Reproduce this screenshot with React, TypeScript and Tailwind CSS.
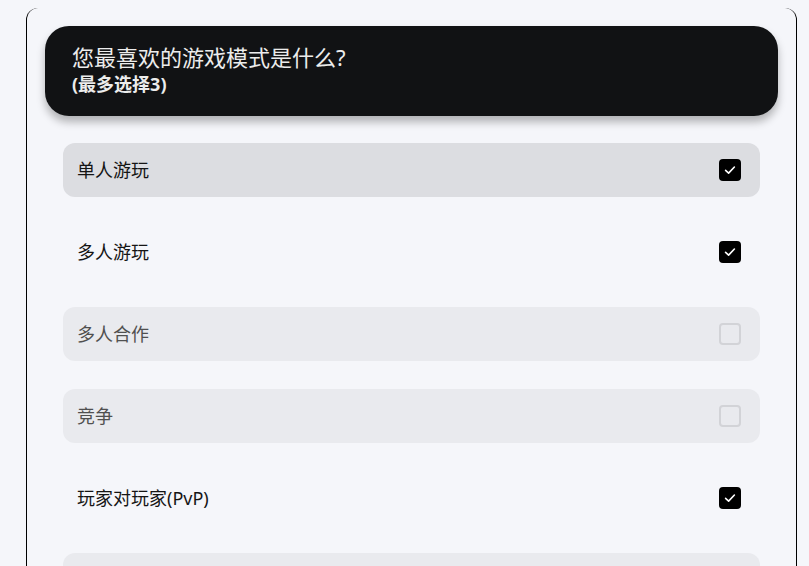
import React from "react";

const options = [
  { label: "单人游玩", checked: true, bg: "bg-[#dcdde1]", disabled: false },
  { label: "多人游玩", checked: true, bg: "bg-transparent", disabled: false },
  { label: "多人合作", checked: false, bg: "bg-[#e9eaee]", disabled: true },
  { label: "竞争", checked: false, bg: "bg-[#e9eaee]", disabled: true },
  { label: "玩家对玩家(PvP)", checked: true, bg: "bg-transparent", disabled: false },
  { label: "玩家对环境(PvE)", checked: false, bg: "bg-[#e9eaee]", disabled: true },
];

function Check() {
  return (
    <svg width="14" height="14" viewBox="0 0 14 14" fill="none">
      <path d="M2.6 7.4 L5.6 10.1 L11.4 4" stroke="white" strokeWidth="1.6" strokeLinecap="round" strokeLinejoin="round" />
    </svg>
  );
}

export default function App() {
  return (
    <div
      className="h-[566px] bg-[#f5f6fa] pt-2 overflow-hidden"
      style={{ fontFamily: '"Noto Sans", "Noto Sans CJK SC", sans-serif' }}
    >
      <div className="ml-[26px] w-[771px] min-h-[600px] border border-t-0 border-black rounded-t-[12px] px-[18px] pt-[18px]">
        <div className="h-[90px] rounded-[24px] bg-[#111214] shadow-[0_6px_8px_rgba(0,0,0,0.28)] px-[27px] pt-[16px]">
          <div className="text-[22px] leading-[30px] text-[#ececec]">您最喜欢的游戏模式是什么?</div>
          <div className="text-[18px] leading-[22px] font-bold text-[#ececec] mt-[1px]">(最多选择3)</div>
        </div>
        <div className="px-[18px] pt-[27px] flex flex-col gap-[28px]">
          {options.map((o) => (
            <div
              key={o.label}
              className={`h-[54px] rounded-[12px] ${o.bg} flex items-center justify-between pl-[14px] pr-[19px]`}
            >
              <span className={`text-[18px] ${o.disabled ? "text-[#505050]" : "text-[#151515]"}`}>{o.label}</span>
              {o.checked ? (
                <span className="w-[22px] h-[22px] rounded-[4px] bg-black flex items-center justify-center">
                  <Check />
                </span>
              ) : (
                <span className="w-[22px] h-[22px] rounded-[4px] border-2 border-[#d2d3d7]" />
              )}
            </div>
          ))}
        </div>
      </div>
    </div>
  );
}
